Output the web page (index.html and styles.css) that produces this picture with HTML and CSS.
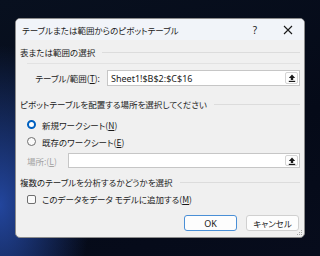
FILE: index.html
```html
<!DOCTYPE html>
<html lang="ja">
<head>
    <meta charset="UTF-8">
    <meta name="viewport" content="width=device-width, initial-scale=1.0">
    <title>ピボットテーブル</title>
    <link rel="stylesheet" href="styles.css">
</head>
<body>
    <div class="dialog">
        <div class="title-bar">
            <span class="title">テーブルまたは範囲からのピボットテーブル</span>
            <span class="help">?</span>
            <span class="close">
                <svg width="10" height="10" viewBox="0 0 10 10"><path d="M1 1L9 9M9 1L1 9" stroke="#1a1a1a" stroke-width="1.1"/></svg>
            </span>
        </div>

        <div class="content">
            <div class="group-header">表または範囲の選択</div>
            <div class="separator"></div>

            <div class="field-row range-row">
                <span class="field-label">テーブル/範囲(<u>T</u>):</span>
                <div class="ref-input">
                    <span class="ref-text">Sheet1!$B$2:$C$16</span>
                    <span class="ref-btn">
                        <svg width="8" height="8" viewBox="0 0 8 8"><path d="M4 0.5L7.2 4H5.2V6H2.8V4H0.8Z" fill="#1a1a1a"/><rect x="0.8" y="6.8" width="6.4" height="1.2" fill="#1a1a1a"/></svg>
                    </span>
                </div>
            </div>

            <div class="group-header header-2">ピボットテーブルを配置する場所を選択してください</div>

            <div class="option-row first-option">
                <span class="radio checked"></span>
                <span>新規ワークシート(<u>N</u>)</span>
            </div>
            <div class="option-row">
                <span class="radio"></span>
                <span>既存のワークシート(<u>E</u>)</span>
            </div>

            <div class="field-row location-row">
                <span class="field-label disabled">場所:(<u>L</u>)</span>
                <div class="ref-input">
                    <span class="ref-text"></span>
                    <span class="ref-btn">
                        <svg width="8" height="8" viewBox="0 0 8 8"><path d="M4 0.5L7.2 4H5.2V6H2.8V4H0.8Z" fill="#1a1a1a"/><rect x="0.8" y="6.8" width="6.4" height="1.2" fill="#1a1a1a"/></svg>
                    </span>
                </div>
            </div>

            <div class="group-header header-3">複数のテーブルを分析するかどうかを選択</div>

            <div class="option-row check-row">
                <span class="checkbox"></span>
                <span>このデータをデータ モデルに追加する(<u>M</u>)</span>
            </div>

            <div class="buttons">
                <button class="btn btn-ok">OK</button>
                <button class="btn">キャンセル</button>
            </div>
        </div>

        <svg class="grip" width="6" height="6" viewBox="0 0 6 6">
            <rect x="4" y="0" width="1" height="1" fill="#a8a8a8"/>
            <rect x="2" y="2" width="1" height="1" fill="#a8a8a8"/>
            <rect x="4" y="2" width="1" height="1" fill="#a8a8a8"/>
            <rect x="0" y="4" width="1" height="1" fill="#a8a8a8"/>
            <rect x="2" y="4" width="1" height="1" fill="#a8a8a8"/>
            <rect x="4" y="4" width="1" height="1" fill="#a8a8a8"/>
        </svg>
    </div>
</body>
</html>
```

FILE: styles.css
```css
* {
    margin: 0;
    padding: 0;
    box-sizing: border-box;
}

body {
    width: 320px;
    height: 256px;
    overflow: hidden;
    font-family: "Noto Sans CJK JP", sans-serif;
    font-size: 8.5px;
    font-feature-settings: "palt";
    color: #1a1a1a;
    background:
        radial-gradient(ellipse 90px 160px at 0px 205px, rgba(40, 80, 180, 0.85), rgba(20, 40, 110, 0) 100%),
        linear-gradient(160deg, #08101f 0%, #050a18 60%, #070c1c 100%);
    padding: 18px 0 0 15px;
}

.dialog {
    position: relative;
    width: 290px;
    height: 220px;
    background: #f0f0f0;
    border: 1px solid #8c8c8c;
    border-radius: 5px;
    overflow: hidden;
    display: flex;
    flex-direction: column;
}

.title-bar {
    height: 21px;
    flex-shrink: 0;
    background: #f1f4f9;
    display: flex;
    align-items: center;
    padding-left: 6px;
}

.title {
    flex: 1;
    white-space: nowrap;
}

.help {
    width: 10px;
    text-align: center;
    font-family: "Noto Sans", sans-serif;
    font-size: 10px;
    margin-right: 23px;
}

.close {
    width: 10px;
    display: flex;
    margin-right: 11px;
}

.content {
    flex: 1;
    display: flex;
    flex-direction: column;
    padding: 0 4px 0 4px;
}

.group-header {
    height: 14px;
    margin-top: 5px;
    display: flex;
    align-items: center;
    white-space: nowrap;
}

.group-header::after {
    content: "";
    flex: 1;
    height: 1px;
    background: #dcdcdc;
    margin-left: 7px;
}

.header-2 {
    margin-top: 11px;
}

.header-3 {
    margin-top: 7px;
}

.separator {
    height: 1px;
    margin: 4px 0 0 7px;
    background: #e2e2e2;
}

.field-row {
    display: flex;
    align-items: center;
}

.range-row {
    height: 16px;
    margin-top: 6px;
}

.range-row .field-label {
    width: 80px;
    text-align: right;
    margin-right: 7px;
}

.location-row {
    height: 15px;
    margin-top: 3px;
    padding-left: 7px;
}

.location-row .field-label {
    width: 41px;
}

.field-label {
    white-space: nowrap;
}

.disabled {
    color: #a2a2a2;
}

.ref-input {
    flex: 1;
    height: 100%;
    background: #fff;
    border: 1px solid #c6c6c6;
    display: flex;
    align-items: center;
    padding: 0 1px 0 3px;
}

.ref-text {
    flex: 1;
    font-family: "Noto Sans", sans-serif;
    font-size: 9px;
    white-space: nowrap;
}

.ref-btn {
    width: 13px;
    height: calc(100% - 2px);
    background: #fdfdfd;
    border: 1px solid #d4d4d4;
    border-radius: 2px;
    display: flex;
    align-items: center;
    justify-content: center;
}

.option-row {
    height: 17px;
    display: flex;
    align-items: center;
    padding-left: 7px;
    white-space: nowrap;
}

.first-option {
    margin-top: 5px;
}

.radio {
    width: 9px;
    height: 9px;
    border-radius: 50%;
    border: 1px solid #6f6f6f;
    background: #fafafa;
    margin-right: 6px;
}

.radio.checked {
    border: 2.5px solid #0060c0;
    background: #fff;
}

.check-row {
    height: 16px;
    margin-top: 2px;
}

.checkbox {
    width: 9px;
    height: 9px;
    border: 1px solid #6f6f6f;
    border-radius: 2px;
    background: #fafafa;
    margin-right: 6px;
}

.buttons {
    display: flex;
    justify-content: flex-end;
    gap: 9px;
    margin-top: 8px;
    padding-right: 1px;
}

.btn {
    width: 53px;
    height: 16px;
    background: #fdfdfd;
    border: 1px solid #d0d0d0;
    border-radius: 3px;
    font-family: "Noto Sans CJK JP", sans-serif;
    font-size: 8.5px;
    font-feature-settings: "palt";
    color: #1a1a1a;
}

.btn-ok {
    border: 1px solid #4a8fd6;
    font-family: "Noto Sans", sans-serif;
    font-size: 9px;
}

.grip {
    position: absolute;
    right: 1px;
    bottom: 1px;
}
```
